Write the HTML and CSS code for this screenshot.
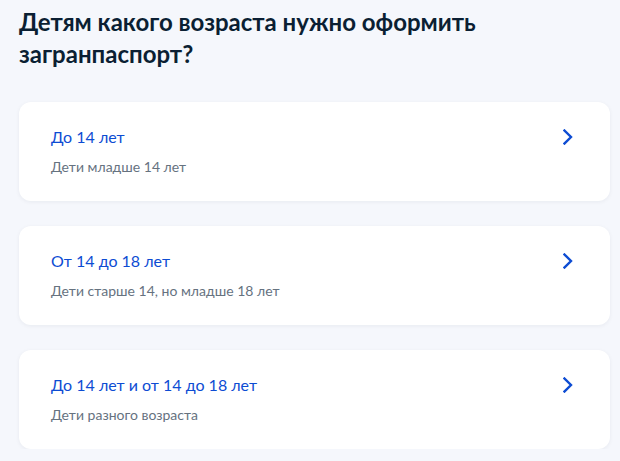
FILE: index.html
```html
<!DOCTYPE html>
<html lang="ru">
<head>
<meta charset="utf-8">
<link rel="stylesheet" href="styles.css">
</head>
<body>
<main class="page">
  <h1 class="title">Детям какого возраста нужно оформить загранпаспорт?</h1>
  <div class="list">
    <a class="card" href="#">
      <div class="card-text">
        <div class="card-title">До 14 лет</div>
        <div class="card-sub">Дети младше 14 лет</div>
      </div>
      <svg class="chev" width="10" height="16" viewBox="0 0 10 16"><path d="M1.5 1.5 L8 8 L1.5 14.5" fill="none" stroke="#0d4cd3" stroke-width="2.4" stroke-linecap="square"/></svg>
    </a>
    <a class="card" href="#">
      <div class="card-text">
        <div class="card-title">От 14 до 18 лет</div>
        <div class="card-sub">Дети старше 14, но младше 18 лет</div>
      </div>
      <svg class="chev" width="10" height="16" viewBox="0 0 10 16"><path d="M1.5 1.5 L8 8 L1.5 14.5" fill="none" stroke="#0d4cd3" stroke-width="2.4" stroke-linecap="square"/></svg>
    </a>
    <a class="card" href="#">
      <div class="card-text">
        <div class="card-title">До 14 лет и от 14 до 18 лет</div>
        <div class="card-sub">Дети разного возраста</div>
      </div>
      <svg class="chev" width="10" height="16" viewBox="0 0 10 16"><path d="M1.5 1.5 L8 8 L1.5 14.5" fill="none" stroke="#0d4cd3" stroke-width="2.4" stroke-linecap="square"/></svg>
    </a>
  </div>
</main>
</body>
</html>
```

FILE: styles.css
```css
html, body {
  margin: 0;
  padding: 0;
  background: #f5f7fc;
}
body {
  font-family: Lato, "Noto Sans", sans-serif;
  color: #0b1f33;
}
.page {
  padding: 6px 10px 0 19px;
}
.title {
  margin: 0;
  font-size: 24px;
  line-height: 32px;
  font-weight: 700;
  color: #0b1f33;
  width: 500px;
}
.list {
  margin-top: 32px;
  display: flex;
  flex-direction: column;
  gap: 25px;
}
.card {
  display: flex;
  align-items: flex-start;
  justify-content: space-between;
  background: #fff;
  border-radius: 12px;
  padding: 23px 37px 24px 32px;
  text-decoration: none;
  box-shadow: 0 1px 4px rgba(11, 31, 51, 0.06);
}
.card-title {
  font-size: 16px;
  line-height: 24px;
  color: #0d4cd3;
}
.card-sub {
  margin-top: 8px;
  font-size: 14px;
  line-height: 20px;
  color: #66727f;
}
.chev {
  margin-top: 4px;
  flex: none;
}
```
